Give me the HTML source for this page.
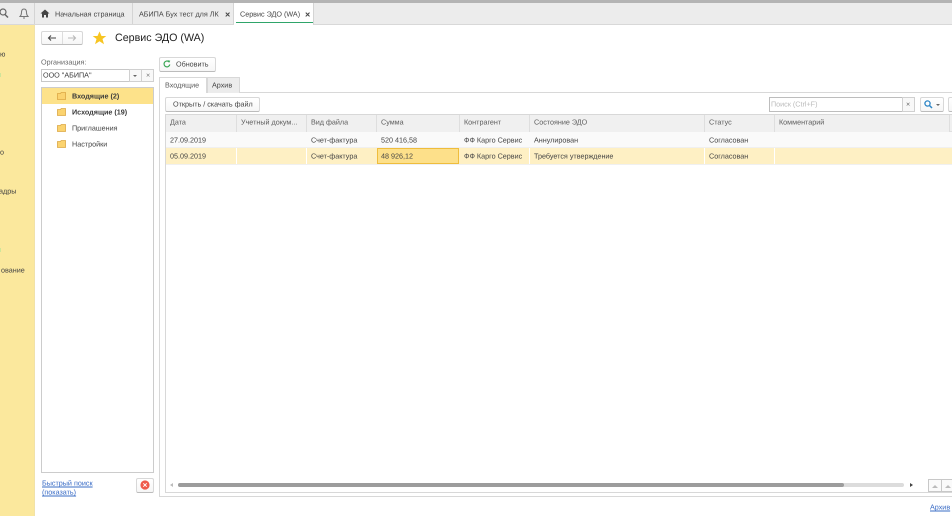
<!DOCTYPE html>
<html><head><meta charset="utf-8">
<style>
html,body{margin:0;padding:0;width:952px;height:516px;overflow:hidden;background:#fff;font-family:"Liberation Sans",sans-serif;font-size:7.2px;color:#404040;text-rendering:geometricPrecision}
#w{position:absolute;left:0;top:0;width:952px;height:516px;overflow:hidden;filter:blur(.3px)}
#w div{position:absolute;box-sizing:border-box;white-space:nowrap}
svg{position:absolute}
.t,.r{line-height:12px;color:#444;transform:translateY(.5px)}
.btn{background:linear-gradient(#fff,#f6f6f6);border:1px solid #d8d8d8;border-bottom:1px solid #bcbcbc;border-radius:2px}
.hd{top:115px;height:17px;background:#f0f0f0;border-right:1px solid #dedede}
.t.h,.r.h{color:#5c5c5c}
#w .sep{width:1px;background:#fff}
.t.l{color:#3a6cc6;text-decoration:underline}
</style></head><body><div id="w">
<div style="left:0;top:0;width:952px;height:3px;background:#b4b4b4"></div>
<div style="left:0;top:3px;width:952px;height:22px;background:#ececec;border-bottom:1px solid #d8d8d8"></div>
<div style="left:34px;top:3px;width:1px;height:21px;background:#d4d4d4"></div>
<div style="left:132px;top:3px;width:1px;height:21px;background:#d4d4d4"></div>
<div style="left:233px;top:3px;width:1px;height:21px;background:#d4d4d4"></div>
<div style="left:234px;top:3px;width:80px;height:22px;background:#fff;border-right:1px solid #d4d4d4"></div>
<div style="left:236px;top:22px;width:77px;height:1px;background:#2fa56a"></div>
<svg style="left:0;top:7px" width="10" height="12" viewBox="0 0 10 12"><circle cx="3" cy="5" r="3" fill="none" stroke="#666" stroke-width="1.2"/><path d="M5 7.5L8 10.5" stroke="#666" stroke-width="1.5"/></svg>
<svg style="left:19px;top:8px" width="10" height="11" viewBox="0 0 10 11"><path d="M5 1C3 1 2.5 2.5 2.5 4.5C2.500 6.500 2 7.500 1 8.500H9C8 7.500 7.500 6.500 7.500 4.500C7.500 2.500 7 1 5 1Z" fill="none" stroke="#777" stroke-width="1"/><path d="M4 9.500H6V10.500H4Z" fill="#777"/></svg>
<svg style="left:40px;top:9px" width="10" height="9" viewBox="0 0 10 9"><path d="M5 .5L.5 4.500H2V8.500H4V6H6V8.500H8V4.500H9.500Z" fill="#444"/></svg>
<div class="t" style="left:55px;top:8px">Начальная страница</div>
<div class="t" style="left:139px;top:8px">АБИПА Бух тест для ЛК</div>
<div class="t" style="left:225px;top:8px;font-size:9px;font-weight:bold">×</div>
<div class="t" style="left:240px;top:8px">Сервис ЭДО (WA)</div>
<div class="t" style="left:305px;top:8px;font-size:9px;font-weight:bold">×</div>

<div style="left:0;top:25px;width:35px;height:491px;background:#fbe89d;border-right:1px solid #f1e2a8"></div>
<div style="left:0;top:73px;width:1px;height:4px;background:#cfe59a"></div>
<div style="left:0;top:248px;width:1px;height:4px;background:#cfe59a"></div>
<div class="t" style="left:0;top:48px">ю</div>
<div class="t" style="left:0;top:146px">о</div>
<div class="t" style="left:-1px;top:185px">адры</div>
<div class="t" style="left:1px;top:264px">ование</div>

<div class="btn" style="left:41px;top:31px;width:42px;height:14px"></div>
<div style="left:62px;top:32px;width:1px;height:12px;background:#ddd"></div>
<svg style="left:47px;top:34px" width="10" height="8" viewBox="0 0 10 8"><path d="M4 1.500L1.500 4L4 6.500M1.500 4H9" fill="none" stroke="#444" stroke-width="1.100"/></svg>
<svg style="left:67px;top:34px" width="10" height="8" viewBox="0 0 10 8"><path d="M6 1.500L8.500 4L6 6.500M1 4H8.500" fill="none" stroke="#b8b8b8" stroke-width="1.100"/></svg>
<svg style="left:92px;top:31px" width="15" height="14" viewBox="0 0 15 14"><path d="M7.500 .5L9.500 5H14.300L10.500 8L12 13.300L7.500 10.300L3 13.300L4.500 8L.7 5H5.500Z" fill="#f7c522"/></svg>
<div style="left:115px;top:31px;font-size:10.700px;line-height:15px;color:#222">Сервис ЭДО (WA)</div>

<div class="t" style="left:41px;top:56px;color:#666">Организация:</div>
<div style="left:41px;top:69px;width:112px;height:13px;background:#fff;border:1px solid #c8c8c8"></div>
<div style="left:129px;top:69px;width:13px;height:13px;border:1px solid #d0d0d0;background:#f8f8f8"></div>
<div style="left:141px;top:69px;width:13px;height:13px;border:1px solid #d0d0d0;background:#f8f8f8"></div>
<div class="t" style="left:43px;top:69px;color:#3a3a3a">ООО "АБИПА"</div>
<div style="left:133px;top:75px;width:0;height:0;border:2px solid transparent;border-top:2px solid #666"></div>
<div class="t" style="left:146px;top:69px;color:#777">×</div>

<div style="left:41px;top:87px;width:113px;height:386px;background:#fff;border:1px solid #cccccc"></div>
<div style="left:42px;top:88px;width:111px;height:16px;background:#fde28a"></div>
<svg style="left:57px;top:92px" width="9" height="8" viewBox="0 0 9 8"><path d="M.5 1.500H3.500L4.200 .5H8.500V7.500H.5Z" fill="#fbd36f" stroke="#dca845" stroke-width=".8"/></svg>
<svg style="left:57px;top:108px" width="9" height="8" viewBox="0 0 9 8"><path d="M.5 1.500H3.500L4.200 .5H8.500V7.500H.5Z" fill="#fbd36f" stroke="#dca845" stroke-width=".8"/></svg>
<svg style="left:57px;top:124px" width="9" height="8" viewBox="0 0 9 8"><path d="M.5 1.500H3.500L4.200 .5H8.500V7.500H.5Z" fill="#fbd36f" stroke="#dca845" stroke-width=".8"/></svg>
<svg style="left:57px;top:140px" width="9" height="8" viewBox="0 0 9 8"><path d="M.5 1.500H3.500L4.200 .5H8.500V7.500H.5Z" fill="#fbd36f" stroke="#dca845" stroke-width=".8"/></svg>
<div class="t" style="left:72px;top:90px;font-weight:bold;color:#3a3a3a">Входящие (2)</div>
<div class="t" style="left:72px;top:106px;font-weight:bold;color:#3a3a3a">Исходящие (19)</div>
<div class="t" style="left:72px;top:122px">Приглашения</div>
<div class="t" style="left:72px;top:138px">Настройки</div>

<div class="t l" style="left:42px;top:477px">Быстрый поиск</div>
<div class="t l" style="left:42px;top:486px">(показать)</div>
<div class="btn" style="left:136px;top:478px;width:18px;height:15px"></div>
<svg style="left:140px;top:480px" width="10" height="10" viewBox="0 0 10 10"><circle cx="5" cy="5" r="4.600" fill="#ef5a4c"/><path d="M3.300 3.300L6.700 6.700M6.700 3.300L3.300 6.700" stroke="#fff" stroke-width="1"/></svg>

<div class="btn" style="left:159px;top:57px;width:57px;height:15px"></div>
<svg style="left:163px;top:60px" width="8" height="8" viewBox="0 0 8 8"><path d="M6.800 4.500A2.900 2.900 0 1 1 5.800 1.700" fill="none" stroke="#3aa655" stroke-width="1.200"/><path d="M4.800 .2L7.300 .8L6 3Z" fill="#3aa655"/></svg>
<div class="t" style="left:176px;top:58px">Обновить</div>

<div style="left:159px;top:92px;width:793px;height:405px;border:1px solid #d8d8d8;border-right:0;background:#fff"></div>
<div style="left:207px;top:77px;width:33px;height:16px;background:#ececec;border:1px solid #d8d8d8;border-bottom:0"></div>
<div style="left:159px;top:77px;width:48px;height:16px;background:#fff;border:1px solid #d8d8d8;border-bottom:0"></div>
<div class="t h" style="left:165px;top:79px">Входящие</div>
<div class="t" style="left:212px;top:79px">Архив</div>

<div class="btn" style="left:165px;top:97px;width:95px;height:15px"></div>
<div class="t" style="left:173px;top:98px">Открыть / скачать файл</div>

<div style="left:769px;top:97px;width:146px;height:15px;border:1px solid #bdbdbd;background:#fff"></div>
<div style="left:902px;top:97px;width:13px;height:15px;border:1px solid #d0d0d0;background:#f8f8f8"></div>
<div class="t" style="left:771px;top:98px;color:#bbb">Поиск (Ctrl+F)</div>
<div class="t" style="left:906px;top:98px;color:#666">×</div>
<div class="btn" style="left:920px;top:97px;width:24px;height:15px"></div>
<svg style="left:924px;top:100px" width="9" height="9" viewBox="0 0 9 9"><circle cx="3.500" cy="3.500" r="2.600" fill="none" stroke="#2e86c6" stroke-width="1.300"/><path d="M5.500 5.500L8 8" stroke="#2e86c6" stroke-width="1.500"/></svg>
<div style="left:936px;top:104px;width:0;height:0;border:2px solid transparent;border-top:2px solid #666"></div>
<div class="btn" style="left:948px;top:97px;width:8px;height:15px"></div>

<div style="left:165px;top:114px;width:787px;height:379px;border:1px solid #d8d8d8;border-right:0;background:#fff"></div>
<div style="left:166px;top:115px;width:786px;height:17px;background:#f0f0f0;border-bottom:1px solid #e0e0e0"></div>
<div class="hd" style="left:166px;width:71px"></div>
<div class="hd" style="left:237px;width:70px"></div>
<div class="hd" style="left:307px;width:70px"></div>
<div class="hd" style="left:377px;width:83px"></div>
<div class="hd" style="left:460px;width:70px"></div>
<div class="hd" style="left:530px;width:175px"></div>
<div class="hd" style="left:705px;width:70px"></div>
<div class="hd" style="left:775px;width:175px"></div>
<div class="r h" style="left:170px;top:116px">Дата</div>
<div class="r h" style="left:241px;top:116px">Учетный докум...</div>
<div class="r h" style="left:311px;top:116px">Вид файла</div>
<div class="r h" style="left:381px;top:116px">Сумма</div>
<div class="r h" style="left:464px;top:116px">Контрагент</div>
<div class="r h" style="left:534px;top:116px">Состояние ЭДО</div>
<div class="r h" style="left:709px;top:116px">Статус</div>
<div class="r h" style="left:779px;top:116px">Комментарий</div>

<div style="left:166px;top:132px;width:786px;height:16px;background:#fafafa;border-bottom:1px solid #f0f0f0"></div>
<div class="r" style="left:170px;top:134px">27.09.2019</div>
<div class="r" style="left:311px;top:134px">Счет-фактура</div>
<div class="r" style="left:381px;top:134px">520 416,58</div>
<div class="r" style="left:464px;top:134px">ФФ Карго Сервис</div>
<div class="r" style="left:534px;top:134px">Аннулирован</div>
<div class="r" style="left:709px;top:134px">Согласован</div>

<div style="left:166px;top:148px;width:786px;height:17px;background:#fef0c4;border-bottom:1px solid #f0f0f0"></div>
<div class="sep" style="left:236px;top:148px;height:16px"></div>
<div class="sep" style="left:306px;top:148px;height:16px"></div>
<div class="sep" style="left:529px;top:148px;height:16px"></div>
<div class="sep" style="left:704px;top:148px;height:16px"></div>
<div class="sep" style="left:774px;top:148px;height:16px"></div>
<div style="left:377px;top:148px;width:82px;height:16px;background:#fde08a;border:1px solid #efbd3c"></div>
<div class="r" style="left:170px;top:150px">05.09.2019</div>
<div class="r" style="left:311px;top:150px">Счет-фактура</div>
<div class="r" style="left:381px;top:150px">48 926,12</div>
<div class="r" style="left:464px;top:150px">ФФ Карго Сервис</div>
<div class="r" style="left:534px;top:150px">Требуется утверждение</div>
<div class="r" style="left:709px;top:150px">Согласован</div>

<div style="left:168px;top:483px;width:0;height:0;border:2px solid transparent;border-right:3px solid #bbb"></div>
<div style="left:178px;top:483px;width:726px;height:4px;background:#dcdcdc;border-radius:2px"></div>
<div style="left:178px;top:483px;width:666px;height:4px;background:#9c9c9c;border-radius:2px"></div>
<div style="left:910px;top:483px;width:0;height:0;border:2px solid transparent;border-left:3px solid #444"></div>
<div style="left:928px;top:479px;width:14px;height:13px;border:1px solid #c8c8c8;background:#fafafa"></div>
<div style="left:941px;top:479px;width:12px;height:13px;border:1px solid #c8c8c8;background:#fafafa"></div>
<div style="left:932px;top:482px;width:0;height:0;border:3px solid transparent;border-bottom:3px solid #bbb"></div>
<div style="left:945px;top:482px;width:0;height:0;border:3px solid transparent;border-bottom:3px solid #bbb"></div>
<div class="t l" style="left:930px;top:501px">Архив</div>
</div></body></html>
